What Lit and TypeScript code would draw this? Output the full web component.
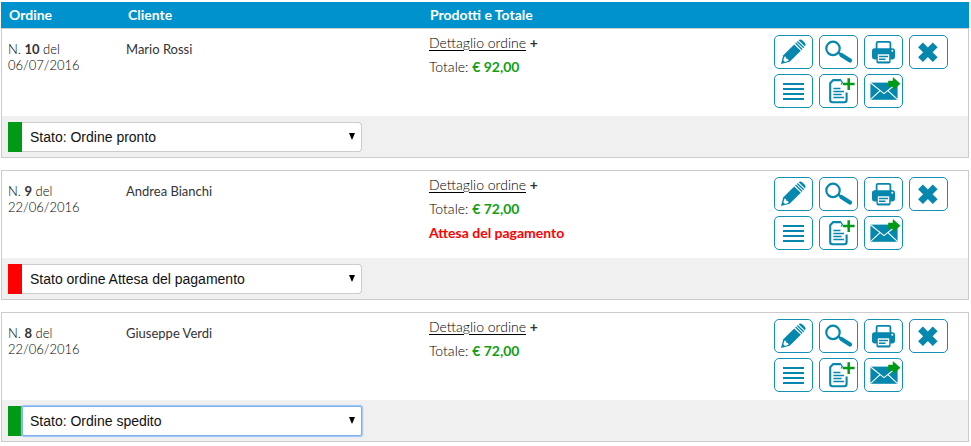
import { LitElement, html, svg, css, nothing } from "lit";
import { customElement, property } from "lit/decorators.js";
import { classMap } from "lit/directives/class-map.js";

interface Order {
  id: number;
  date: string;
  customer: string;
  total: string;
  status: string;
  alert?: string;
  tone: "ok" | "ko";
  active?: boolean;
}

const ORDERS: Order[] = [
  { id: 10, date: "06/07/2016", customer: "Mario Rossi", total: "92,00", status: "Stato: Ordine pronto", tone: "ok" },
  { id: 9, date: "22/06/2016", customer: "Andrea Bianchi", total: "72,00", status: "Stato ordine Attesa del pagamento", alert: "Attesa del pagamento", tone: "ko" },
  { id: 8, date: "22/06/2016", customer: "Giuseppe Verdi", total: "72,00", status: "Stato: Ordine spedito", tone: "ok", active: true },
];

const STATUSES = ORDERS.map((o) => o.status);

const ICONS = {
  pencil: svg`
    <path d="M9.3 20.3L20.2 9.4L26.8 15.8L15.7 26.7L7 29Z" fill="currentColor"/>
    <path d="M10.6 21.6L9.3 25.2L11 26.9L14.6 25.7L14 24.1L12.3 23.7L12 22Z" fill="#fff"/>
    <path d="M21.6 8.1L28.1 14.5M23.3 6.4L29.8 12.8" stroke="currentColor" stroke-width="1.4"/>
    <path d="M24.6 5.2Q26.4 3.8 28.2 5.3L31 8Q32.2 9.8 31 11.4Z" fill="currentColor"/>`,
  search: svg`
    <circle cx="14" cy="13.4" r="6.7" fill="none" stroke="currentColor" stroke-width="2.2"/>
    <path d="M19 17.3L22 19.6" stroke="currentColor" stroke-width="2.4"/>
    <path d="M22.4 20L31 25.6" stroke="currentColor" stroke-width="4.2" stroke-linecap="round"/>`,
  print: svg`
    <path d="M12.6 14V8.2Q12.6 6.8 14 6.8H25Q26.4 6.8 26.4 8.2V14" fill="none" stroke="currentColor" stroke-width="1.8"/>
    <path d="M10.5 13.2H28.5Q31 13.2 31 15.7V22Q31 24.4 28.6 24.4H10.4Q8 24.4 8 22V15.7Q8 13.2 10.5 13.2Z" fill="currentColor"/>
    <circle cx="28.3" cy="15.8" r="1" fill="#fff"/>
    <path d="M12.4 18.7H26.6V26.8Q26.6 28.4 25 28.4H14Q12.4 28.4 12.4 26.8Z" fill="currentColor"/>
    <path d="M13.8 19.3H25.2V26.4H13.8Z" fill="#fff"/>
    <path d="M15 21.5H24M15 24.2H21.5" stroke="currentColor" stroke-width="1.5"/>`,
  remove: svg`
    <path d="M11.5 9.9L26.2 24.7M26.2 9.9L11.5 24.7" stroke="currentColor" stroke-width="6.8"/>`,
  list: svg`
    <path d="M9 10H30M9 15H30M9 20H30M9 25H30" stroke="currentColor" stroke-width="1.8"/>`,
  note: svg`
    <path d="M21.5 6.1H14.2L11.2 9.2V26Q11.2 28.2 13.4 28.2H25.4Q27.6 28.2 27.6 26V18.5" fill="none" stroke="currentColor" stroke-width="2.1"/>
    <path d="M21 5.2L23.4 8.6L22 10.5" fill="none" stroke="currentColor" stroke-width="1.2"/>
    <path d="M14.4 14.5H21.5M14.4 17.5H25M14.4 20.5H22.6M14.4 23.5H25" stroke="currentColor" stroke-width="1.6"/>
    <path d="M29.7 4.2V16M23.8 10.1H35.6" stroke="#009a17" stroke-width="2.5"/>`,
  mail: svg`
    <path d="M6.4 8.6H33.6V25.8H6.4Z" fill="currentColor"/>
    <path d="M6.4 8.8L20 19.6L33.6 8.8M6.4 25.6L15.8 16.8M33.6 25.6L24.2 16.8" fill="none" stroke="#fff" stroke-width="1.1"/>
    <path d="M24.2 6.8H28.8V3L36.4 9.8L28.8 16.6V12.8H24.2Z" fill="#009a17"/>`,
};

const ACTIONS: Array<[keyof typeof ICONS, string]> = [
  ["pencil", "Modifica"],
  ["search", "Visualizza"],
  ["print", "Stampa"],
  ["remove", "Elimina"],
  ["list", "Elenco"],
  ["note", "Aggiungi nota"],
  ["mail", "Invia email"],
];

@customElement("order-actions")
export class OrderActions extends LitElement {
  static styles = css`
    :host {
      display: grid;
      grid-template-columns: repeat(4, 39px);
      gap: 5px 6px;
    }
    .action {
      display: flex;
      box-sizing: border-box;
      width: 39px;
      height: 34px;
      padding: 0;
      border: 1px solid #1490b4;
      border-radius: 5px;
      background: #fff;
      color: #0688ae;
      cursor: pointer;
    }
    .icon {
      display: block;
      width: 37px;
      height: 32px;
    }
  `;

  render() {
    return ACTIONS.map(
      ([icon, label]) => html`<button class="action" type="button" aria-label=${label}>
        <svg class="icon" viewBox="1 1 37 32" aria-hidden="true">${ICONS[icon]}</svg>
      </button>`
    );
  }
}

@customElement("status-select")
export class StatusSelect extends LitElement {
  @property() value = "";
  @property() tone = "ok";
  @property({ type: Boolean }) active = false;

  static styles = css`
    :host {
      display: block;
    }
    .field {
      position: relative;
      display: flex;
      width: 354px;
      max-width: 100%;
      height: 30px;
    }
    .tone {
      flex: none;
      width: 14px;
      background: #009a17;
    }
    .tone.ko {
      background: #f00;
    }
    .select {
      flex: 1;
      min-width: 0;
      appearance: none;
      margin: 0;
      padding: 0 24px 0 8px;
      border: 1px solid #ccc;
      border-left-width: 0;
      border-radius: 0 4px 4px 0;
      outline: none;
      background: #fff;
      color: #111;
      font: 14px "Liberation Sans", Arial, sans-serif;
    }
    .select.active,
    .select:focus {
      padding-left: 7px;
      border: 1px solid #7fb2ec;
      border-radius: 2px;
      box-shadow: 0 0 1px 1px #9cc6f3;
    }
    .arrow {
      position: absolute;
      right: 6px;
      top: 11px;
      width: 8px;
      height: 7px;
      pointer-events: none;
    }
  `;

  render() {
    return html`<div class="field">
      <span class=${classMap({ tone: true, ko: this.tone === "ko" })}></span>
      <select class=${classMap({ select: true, active: this.active })} aria-label="Stato ordine">
        ${STATUSES.map((s) => html`<option ?selected=${s === this.value}>${s}</option>`)}
      </select>
      <svg class="arrow" viewBox="0 0 8 7" aria-hidden="true"><path d="M1 0H7L4 7Z" fill="#000" /></svg>
    </div>`;
  }
}

@customElement("app-root")
export class AppRoot extends LitElement {
  static styles = css`
    :host {
      display: block;
      padding: 2px 2px 4px 1px;
      background: #fff;
      color: #333;
      font: 14px/16px Lato, sans-serif;
    }
    .orders {
      width: 100%;
      table-layout: fixed;
      border-spacing: 0;
    }
    .col-order {
      width: 119px;
    }
    .col-customer {
      width: 302px;
    }
    .col-actions {
      width: 201px;
    }
    .head {
      height: 26px;
      padding: 0 8px;
      box-sizing: border-box;
      background: #0092cc;
      color: #fff;
      text-align: left;
      font-weight: 700;
    }
    .order + .order::before {
      content: "";
      display: table-row;
      height: 12px;
    }
    .cell {
      box-sizing: border-box;
      height: 88px;
      padding: 12px 6px 0;
      border-top: 1px solid #ccc;
      vertical-align: top;
      font-size: 13px;
    }
    .cell:first-child {
      border-left: 1px solid #ccc;
    }
    .cell:last-child {
      border-right: 1px solid #ccc;
    }
    .cell.products {
      padding: 2px 7px 0;
      font-size: 14px;
      line-height: 24px;
    }
    .cell.actions {
      padding-top: 6px;
    }
    .line {
      margin: 0;
    }
    .first,
    .products {
      color: #000;
      font-weight: 300;
    }
    .number,
    .more {
      color: #333;
      font-weight: 700;
    }
    .detail {
      color: inherit;
      text-underline-offset: 2px;
    }
    .price {
      color: #12a012;
      font-weight: 700;
    }
    .alert {
      color: #f00;
      font-weight: 700;
    }
    .status {
      box-sizing: border-box;
      height: 42px;
      padding: 6px 6px 5px;
      border: 1px solid #ccc;
      border-top: 0;
      background: #f0f0f0;
    }
  `;

  private renderOrder(o: Order) {
    return html`<tbody class="order">
      <tr>
        <td class="cell first">N. <span class="number">${o.id}</span> del<br />${o.date}</td>
        <td class="cell">${o.customer}</td>
        <td class="cell products">
          <p class="line"><a class="detail" href="#">Dettaglio ordine</a> <span class="more">+</span></p>
          <p class="line">Totale: <span class="price">€ ${o.total}</span></p>
          ${o.alert ? html`<p class="line alert">${o.alert}</p>` : nothing}
        </td>
        <td class="cell actions"><order-actions></order-actions></td>
      </tr>
      <tr>
        <td class="status" colspan="4">
          <status-select .value=${o.status} .tone=${o.tone} .active=${!!o.active}></status-select>
        </td>
      </tr>
    </tbody>`;
  }

  render() {
    return html`<table class="orders">
      <colgroup>
        <col class="col-order" />
        <col class="col-customer" />
        <col />
        <col class="col-actions" />
      </colgroup>
      <thead>
        <tr>
          <th class="head" scope="col">Ordine</th>
          <th class="head" scope="col">Cliente</th>
          <th class="head" scope="col" colspan="2">Prodotti e Totale</th>
        </tr>
      </thead>
      ${ORDERS.map((o) => this.renderOrder(o))}
    </table>`;
  }
}
